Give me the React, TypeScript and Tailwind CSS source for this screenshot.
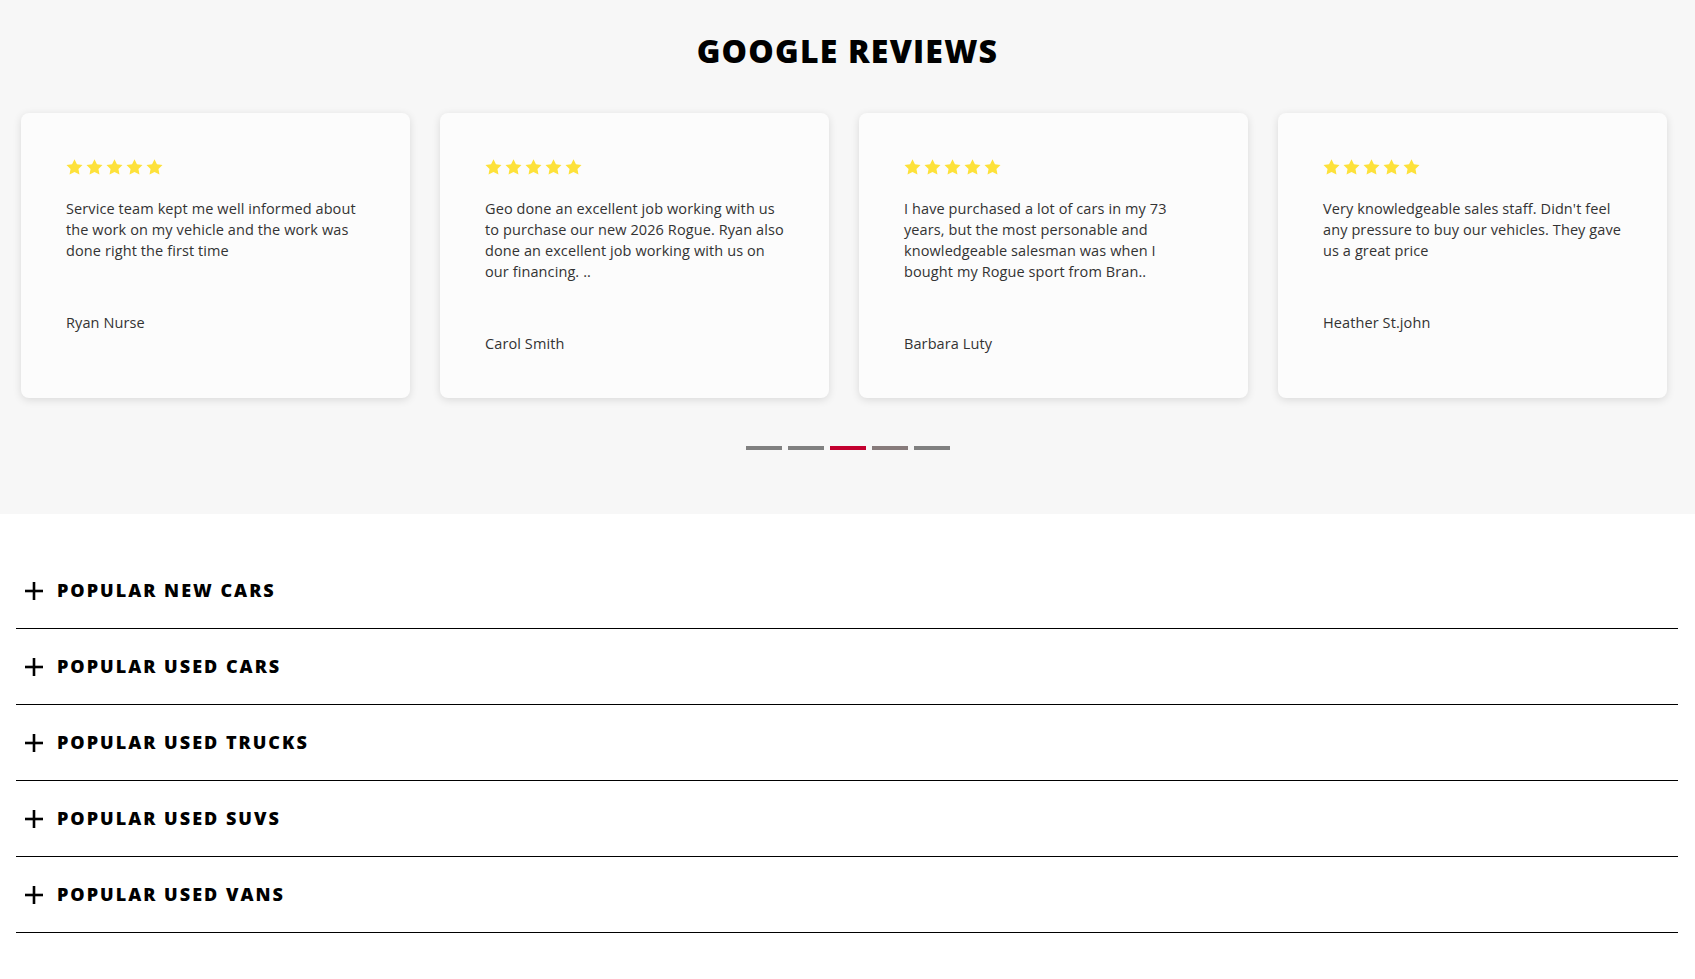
type Review = {
  text: string;
  author: string;
};

const reviews: Review[] = [
  {
    text: "Service team kept me well informed about the work on my vehicle and the work was done right the first time",
    author: "Ryan Nurse",
  },
  {
    text: "Geo done an excellent job working with us to purchase our new 2026 Rogue. Ryan also done an excellent job working with us on our financing. ..",
    author: "Carol Smith",
  },
  {
    text: "I have purchased a lot of cars in my 73 years, but the most personable and knowledgeable salesman was when I bought my Rogue sport from Bran..",
    author: "Barbara Luty",
  },
  {
    text: "Very knowledgeable sales staff. Didn't feel any pressure to buy our vehicles. They gave us a great price",
    author: "Heather St.john",
  },
];

const popularLinks = [
  "POPULAR NEW CARS",
  "POPULAR USED CARS",
  "POPULAR USED TRUCKS",
  "POPULAR USED SUVS",
  "POPULAR USED VANS",
];

// Five filled stars
const Stars = () => {
  return (
    <div className="flex items-center gap-[3px] h-[17px]">
      {[0, 1, 2, 3, 4].map((i) => (
        <svg key={i} viewBox="0 0 20 19" className="w-[17px] h-[16px]">
          <path
            d="M10 0.3l2.9 6 6.6.9-4.8 4.6 1.2 6.6L10 15.3l-5.9 3.1 1.2-6.6L0.5 7.2l6.6-.9z"
            fill="#fde13a"
          />
        </svg>
      ))}
    </div>
  );
};

const PlusIcon = () => {
  return (
    <svg viewBox="0 0 18 18" className="w-[18px] h-[18px] shrink-0">
      <rect x="7.7" y="0" width="2.6" height="18" fill="#000" />
      <rect x="0" y="7.7" width="18" height="2.6" fill="#000" />
    </svg>
  );
};

const ReviewCard = ({ review }: { review: Review }) => {
  return (
    <div className="w-[389px] h-[285px] shrink-0 rounded-[8px] bg-[#fcfcfc] shadow-[0_2px_8px_rgba(0,0,0,0.12)] pt-[45px] px-[45px]">
      <Stars />
      <p className="mt-[23px] w-[300px] text-[14.5px] leading-[21px] tracking-[0.1px] text-[#333]">{review.text}</p>
      <p className="mt-[51px] text-[14.5px] leading-[21px] tracking-[0.1px] text-[#333]">{review.author}</p>
    </div>
  );
};

const GoogleReviews = () => {
  const active = 2;
  return (
    <section className="bg-[#f7f7f7] h-[514px] pt-[32px] overflow-hidden">
      <h2 className="text-center text-[32px] leading-[38px] font-extrabold tracking-[1.2px] text-black">
        GOOGLE REVIEWS
      </h2>
      <div className="flex gap-[30px] pl-[21px] mt-[43px]">
        {reviews.map((r) => (
          <ReviewCard key={r.author} review={r} />
        ))}
      </div>
      <div className="flex justify-center gap-[6px] mt-[48px]">
        {[0, 1, 2, 3, 4].map((i) => (
          <span
            key={i}
            className={
              i === active
                ? "w-[36px] h-[4px] bg-[#c3002f]"
                : i === 3
                ? "w-[36px] h-[4px] bg-[#877b7b]"
                : "w-[36px] h-[4px] bg-[#808080]"
            }
          />
        ))}
      </div>
    </section>
  );
};

const PopularLinks = () => {
  return (
    <div className="mt-[39px] ml-[16px] mr-[17px]">
      {popularLinks.map((label) => (
        <button
          key={label}
          className="flex items-center w-full h-[76px] border-b border-black pl-[9px] text-left"
        >
          <PlusIcon />
          <span className="ml-[14px] text-[18px] font-extrabold tracking-[2px] text-black">{label}</span>
        </button>
      ))}
    </div>
  );
};

const App = () => {
  return (
    <div className="min-h-screen bg-white font-['Open_Sans',sans-serif]">
      <GoogleReviews />
      <PopularLinks />
    </div>
  );
};

export default App;
